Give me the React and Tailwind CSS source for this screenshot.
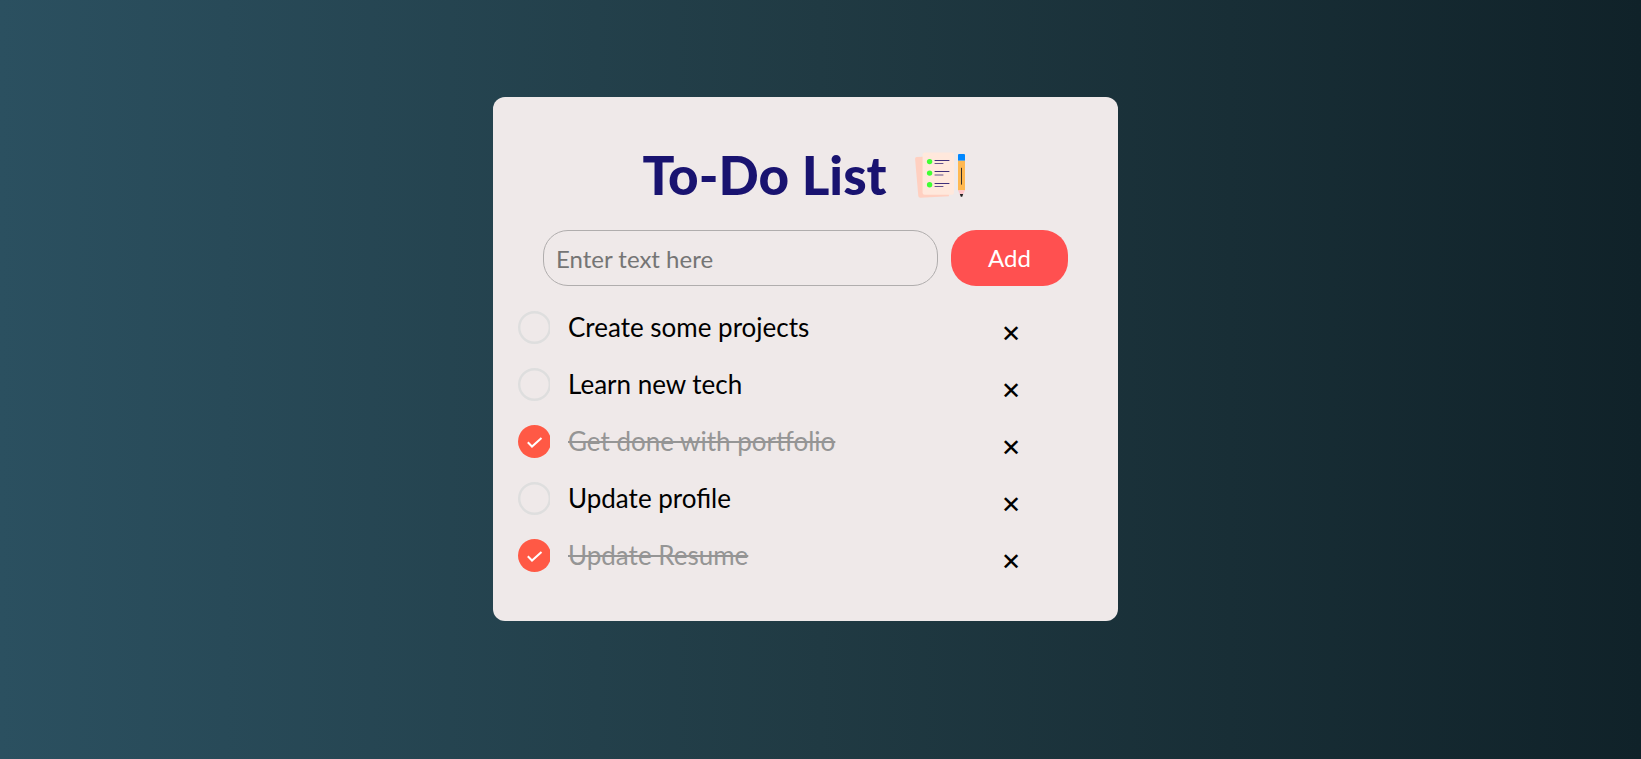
import { useState } from "react";

const initialTasks = [
  { id: 1, text: "Create some projects", done: false },
  { id: 2, text: "Learn new tech", done: false },
  { id: 3, text: "Get done with portfolio", done: true },
  { id: 4, text: "Update profile", done: false },
  { id: 5, text: "Update Resume", done: true },
];

function ChecklistIcon() {
  return (
    <svg viewBox="0 0 50 50" className="mt-1 size-[50px] shrink-0" aria-hidden="true">
      <path d="M1.6 5.1 30 4l4 40.3-28.6 1.5a2 2 0 0 1-2.1-1.8L.1 7a1.7 1.7 0 0 1 1.5-1.9Z" fill="#ffd0c1" />
      <rect x="7.6" y=".5" width="31.4" height="42.3" rx="2" fill="#ffe8dc" />
      <g fill="#40ff33">
        <circle cx="14.6" cy="9.6" r="2.7" />
        <circle cx="14.6" cy="21.1" r="2.7" />
        <circle cx="14.6" cy="32.7" r="2.7" />
      </g>
      <g stroke="#3f2f7a" strokeWidth="1" strokeLinecap="round">
        <path d="M20 8.5h14M20 19.5h14M20 31.5h14" />
        <path d="M20 11.5h8M20 23h8M20 34.5h8" opacity=".8" />
      </g>
      <path d="M43 3a1 1 0 0 1 1-1h5a1 1 0 0 1 1 1V8.8h-7Z" fill="#0087ff" />
      <path d="M43 8.8h7v29.5h-7Z" fill="#ffb850" />
      <path d="M43 38.3h7l-2 4.3h-3Z" fill="#ffc5c9" />
      <path d="M44.8 42h3.4l-1 2.7h-1.4Z" fill="#222" />
      <path d="M46.5 15.8v16.8" stroke="#3a3228" strokeWidth="1" />
    </svg>
  );
}

function Tick({ done }) {
  return (
    <svg viewBox="0 0 32 33" className="h-[33px] w-8" aria-hidden="true">
      {done ? (
        <>
          <circle cx="16.5" cy="16.5" r="16.5" fill="#ff5945" />
          <path d="m9.8 17.3 4.2 4.2L23.5 13" fill="none" stroke="#fff" strokeWidth="2" />
        </>
      ) : (
        <circle cx="16.5" cy="16.5" r="15.3" fill="none" stroke="#dedede" strokeWidth="2.4" />
      )}
    </svg>
  );
}

export default function App() {
  const [tasks, setTasks] = useState(initialTasks);
  const [draft, setDraft] = useState("");

  const addTask = (event) => {
    event.preventDefault();
    if (!draft.trim()) return;
    setTasks([...tasks, { id: Date.now(), text: draft.trim(), done: false }]);
    setDraft("");
  };
  const toggle = (id) =>
    setTasks(tasks.map((t) => (t.id === id ? { ...t, done: !t.done } : t)));
  const remove = (id) => setTasks(tasks.filter((t) => t.id !== id));

  return (
    <main className="flex min-h-screen items-start justify-center bg-[linear-gradient(to_right,#2b5060,#203a43,#102229)] pt-[97px] pr-[30px] pb-8 font-['Gill_Sans','Gill_Sans_MT',Lato,sans-serif]">
      <section className="w-full max-w-[625px] rounded-xl bg-[#efe9e9] pt-[50px] pb-[37px]">
        <h1 className="flex items-center justify-center gap-7 pr-1 text-[53px] leading-[56px] font-black text-[#191370]">
          To-Do List
          <ChecklistIcon />
        </h1>
        <form onSubmit={addTask} className="mt-[27px] flex gap-[13px] px-[50px]">
          <input
            type="text"
            aria-label="New task"
            placeholder="Enter text here"
            value={draft}
            onChange={(e) => setDraft(e.target.value)}
            className="h-14 min-w-0 flex-1 rounded-[25px] border border-[#b0adad] px-3 text-2xl placeholder:text-[#757575]"
          />
          <button type="submit" className="h-14 w-[117px] rounded-[25px] bg-[#ff5050] text-2xl text-white">
            Add
          </button>
        </form>
        <ul className="mt-[13px] pr-[91px] pl-[25px]">
          {tasks.map((task) => (
            <li key={task.id} className="flex h-[57px] items-center justify-between">
              <label className="flex cursor-pointer items-center gap-[18px]">
                <input type="checkbox" checked={task.done} onChange={() => toggle(task.id)} className="sr-only" />
                <Tick done={task.done} />
                <span className={task.done ? "text-[26px] text-[#959595] line-through" : "text-[26px] text-black"}>
                  {task.text}
                </span>
              </label>
              <button
                type="button"
                aria-label={`Delete ${task.text}`}
                onClick={() => remove(task.id)}
                className="w-8 pt-3 font-['DejaVu_Sans',sans-serif] text-2xl font-bold text-black"
              >
                ✕
              </button>
            </li>
          ))}
        </ul>
      </section>
    </main>
  );
}
